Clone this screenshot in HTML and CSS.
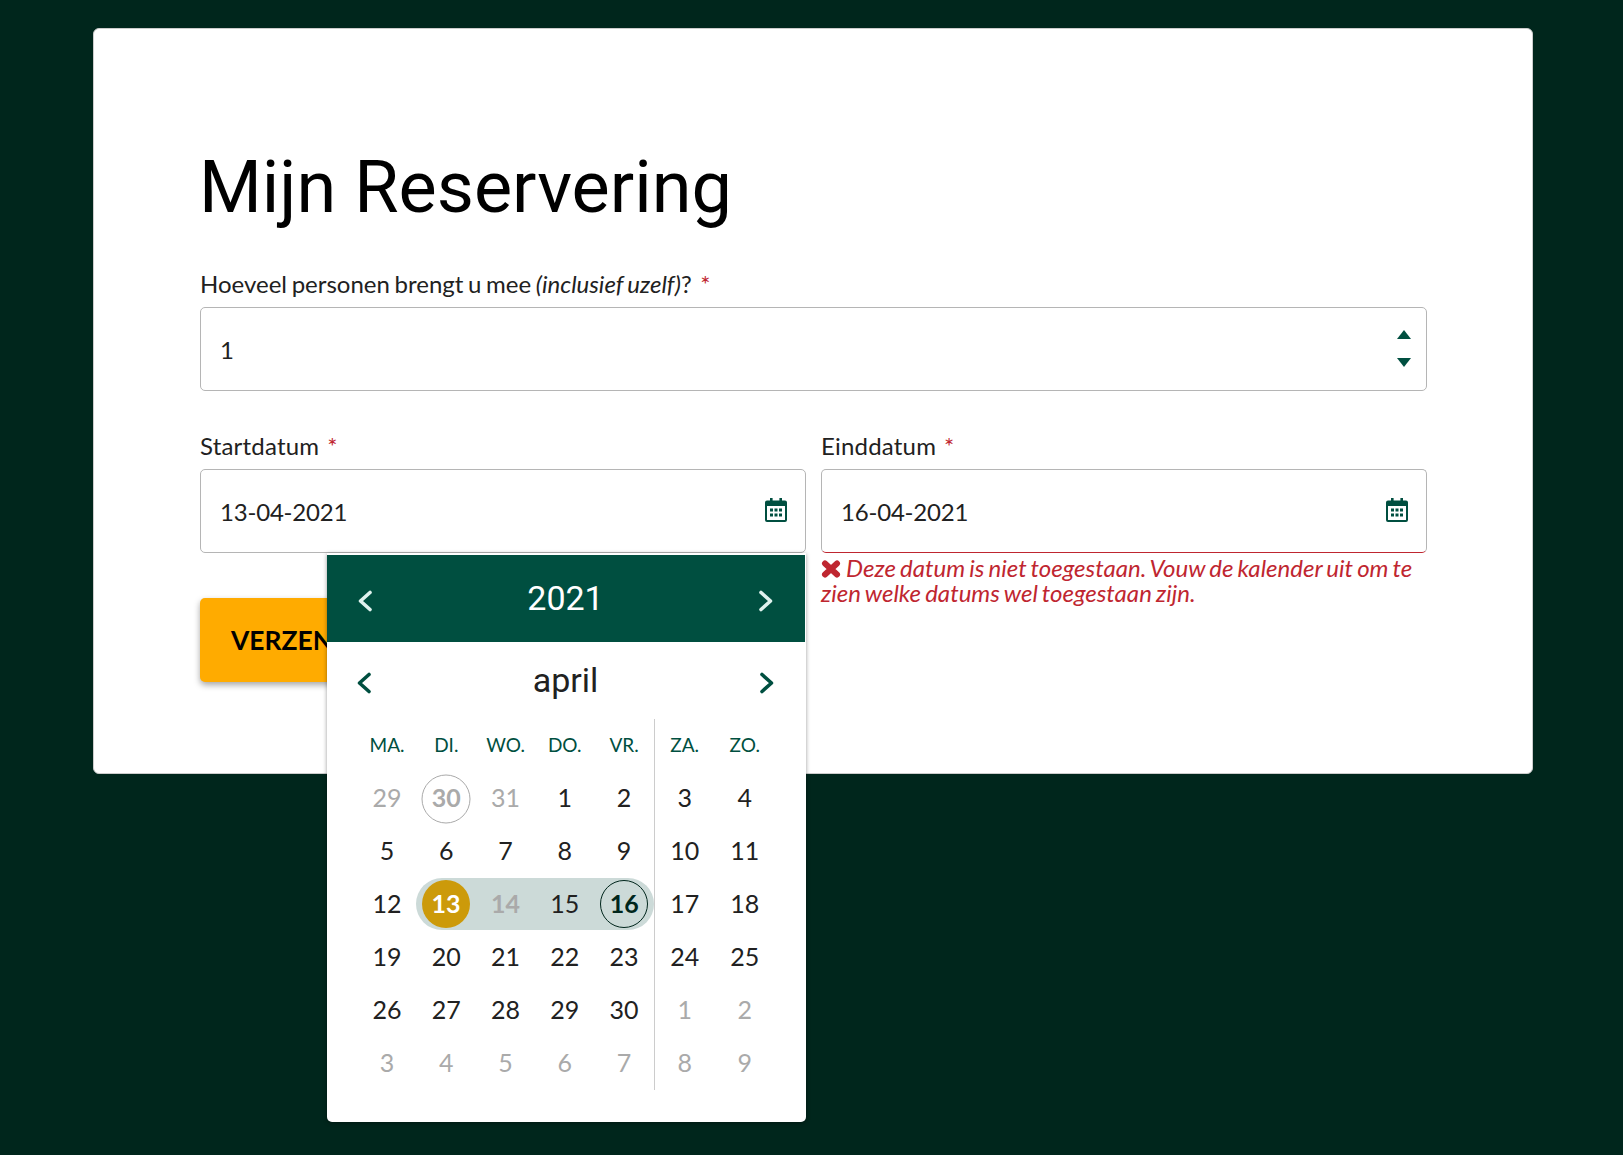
FILE: index.html
```html
<!DOCTYPE html>
<html lang="nl">
<head>
<meta charset="utf-8">
<title>Mijn Reservering</title>
<link rel="stylesheet" href="styles.css">
</head>
<body>
<svg class="defs" width="0" height="0" aria-hidden="true">
  <symbol id="cal" viewBox="0 0 22 24">
    <path fill="currentColor" d="M5 0h2.600v2.500h6.800V0H17v2.500h3a2 2 0 0 1 2 2V22a2 2 0 0 1-2 2H2a2 2 0 0 1-2-2V4.500a2 2 0 0 1 2-2h3V0zM2 8v14h18V8H2z"/>
    <path fill="currentColor" d="M5 10.500h3v3H5zM9.500 10.500h3v3h-3zM14 10.500h3v3h-3zM5 15.500h3v3H5zM9.500 15.500h3v3h-3zM14 15.500h3v3h-3z"/>
  </symbol>
  <symbol id="chev" viewBox="0 0 14 22">
    <path fill="none" stroke="currentColor" stroke-width="3.600" stroke-linecap="round" stroke-linejoin="round" d="M12 2.500 2.500 11l9.500 8.500"/>
  </symbol>
</svg>
<main class="card">
  <h1 class="title">Mijn Reservering</h1>
  <div class="field">
    <label class="label">Hoeveel personen brengt u mee <em>(inclusief uzelf)</em>? <span class="req">*</span></label>
    <div class="input">
      <span>1</span>
      <span class="spin">
        <svg width="14" height="9" viewBox="0 0 14 9"><path fill="currentColor" d="M7 0l7 9H0z"/></svg>
        <svg width="14" height="9" viewBox="0 0 14 9"><path fill="currentColor" d="M0 0h14L7 9z"/></svg>
      </span>
    </div>
  </div>
  <div class="dates">
    <div class="field date-field">
      <label class="label">Startdatum <span class="req">*</span></label>
      <div class="input">
        <span>13-04-2021</span>
        <svg class="cal-icon"><use href="#cal"/></svg>
      </div>
      <section class="picker">
        <header class="year-bar">
          <svg class="chev"><use href="#chev"/></svg>
          <span>2021</span>
          <svg class="chev flip"><use href="#chev"/></svg>
        </header>
        <div class="month-bar">
          <svg class="chev"><use href="#chev"/></svg>
          <span>april</span>
          <svg class="chev flip"><use href="#chev"/></svg>
        </div>
        <div class="cal">
          <div class="dow">MA.</div><div class="dow">DI.</div><div class="dow">WO.</div><div class="dow">DO.</div><div class="dow">VR.</div><div class="dow">ZA.</div><div class="dow">ZO.</div>
          <div class="d off">29</div><div class="d off bold today">30</div><div class="d off">31</div><div class="d">1</div><div class="d">2</div><div class="d">3</div><div class="d">4</div>
          <div class="d">5</div><div class="d">6</div><div class="d">7</div><div class="d">8</div><div class="d">9</div><div class="d">10</div><div class="d">11</div>
          <div class="d">12</div><div class="d r-start"><span class="start">13</span></div><div class="d r off bold">14</div><div class="d r">15</div><div class="d r-end"><span class="end">16</span></div><div class="d">17</div><div class="d">18</div>
          <div class="d">19</div><div class="d">20</div><div class="d">21</div><div class="d">22</div><div class="d">23</div><div class="d">24</div><div class="d">25</div>
          <div class="d">26</div><div class="d">27</div><div class="d">28</div><div class="d">29</div><div class="d">30</div><div class="d off">1</div><div class="d off">2</div>
          <div class="d off">3</div><div class="d off">4</div><div class="d off">5</div><div class="d off">6</div><div class="d off">7</div><div class="d off">8</div><div class="d off">9</div>
        </div>
      </section>
    </div>
    <div class="field date-field">
      <label class="label">Einddatum <span class="req">*</span></label>
      <div class="input invalid">
        <span>16-04-2021</span>
        <svg class="cal-icon"><use href="#cal"/></svg>
      </div>
      <p class="error"><svg class="x" viewBox="0 0 20 18"><path fill="none" stroke="currentColor" stroke-width="6" stroke-linecap="round" d="M4 3.500 16 14.500M16 3.500 4 14.500"/></svg> Deze datum is niet toegestaan. Vouw de kalender uit om te zien welke datums wel toegestaan zijn.</p>
    </div>
  </div>
  <button class="submit" type="button">VERZENDEN</button>
</main>
</body>
</html>
```
FILE: styles.css
```css
* { box-sizing: border-box; }
html, body { margin: 0; }
body {
  background: #00261c;
  color: #212121;
  font-family: "Lato", sans-serif;
  font-size: 24px;
  height: 1155px;
  overflow: hidden;
  padding: 28px 90px 0 93px;
}
.defs { display: block; height: 0; }
.card {
  background: #fff;
  border: 1px solid #ccc;
  border-radius: 6px;
  height: 746px;
  padding: 117px 105px 0 106px;
}
.title {
  font-family: "Roboto", sans-serif;
  font-weight: 400;
  font-size: 72px;
  line-height: 84px;
  color: #000;
  margin: 0 0 40px -1px;
}
.label {
  display: block;
  line-height: 28px;
  margin-bottom: 9px;
  word-spacing: -1.500px;
}
.date-field .label { letter-spacing: .2px; }
.date-field .req { margin-left: 3px; }
.req { color: #bf2630; margin-left: 4px; }
.input {
  height: 84px;
  border: 1px solid #b5b5b5;
  border-radius: 5px;
  padding: 0 19px;
  display: flex;
  align-items: center;
  justify-content: space-between;
  background: #fff;
  letter-spacing: -.2px;
}
.input.invalid { border-bottom-color: #bf2630; }
.spin {
  display: flex;
  flex-direction: column;
  gap: 19px;
  color: #004f40;
  margin: -2px -4px 0 0;
}
.spin svg { display: block; }
.cal-icon { width: 22px; height: 24px; color: #004f40; margin: -2px -1px 0 0; }
.dates {
  display: grid;
  grid-template-columns: 606px 606px;
  gap: 15px;
  margin-top: 41px;
}
.date-field { position: relative; }
.error {
  margin: 2px 0 0;
  color: #bf2630;
  font-style: italic;
  line-height: 25px;
  word-spacing: -1.500px;
}
.x { width: 20px; height: 18px; vertical-align: -1px; margin-right: 1px; }
.submit {
  display: block;
  height: 84px;
  width: 260px;
  margin-top: -7px;
  border: 0;
  border-radius: 5px;
  background: #ffab00;
  color: #000;
  font: 700 26.400px "Lato", sans-serif;
  text-align: left;
  padding: 0 0 0 31px;
  box-shadow: 0 3px 6px rgba(0,0,0,.35);
}
.picker {
  position: absolute;
  left: 127px;
  top: 121px;
  width: 479px;
  height: 569px;
  z-index: 2;
  background: #fff;
  border-radius: 0 0 5px 5px;
  padding-top: 2px;
  box-shadow: 0 1px 4px rgba(0,0,0,.4);
}
.year-bar, .month-bar {
  display: flex;
  align-items: center;
  justify-content: space-between;
  font-family: "Roboto", sans-serif;
  font-size: 34px;
}
.year-bar { height: 87px; background: #004f40; color: #fff; margin-right: 1px; padding: 0 32px 0 31px; }
.year-bar span { margin-top: -2px; }
.year-bar .chev { color: #dff2ee; }
.month-bar { height: 77px; color: #004f40; padding: 0 32px 0 30px; }
.month-bar span { color: #212121; margin-top: -2px; }
.chev { width: 14px; height: 22px; display: block; margin-top: 4px; }
.chev.flip { transform: scaleX(-1); }
.cal {
  position: relative;
  display: grid;
  grid-template-columns: repeat(5, 59.250px) 62.100px 58px;
  grid-template-rows: 51px repeat(6, 53px);
  padding-left: 30.400px;
  text-align: center;
}
.cal::after {
  content: "";
  position: absolute;
  left: 327px;
  top: 0;
  width: 1px;
  height: 371px;
  background: #ccc;
}
.dow, .d { display: flex; align-items: center; justify-content: center; }
.dow { font-size: 19px; color: #004f40; }
.d { font-size: 25px; height: 53px; }
.off { color: #aaa; }
.bold { font-weight: 700; }
.today { position: relative; }
.today::after {
  content: "";
  position: absolute;
  left: 50%; top: calc(50% + 2px);
  width: 47px; height: 47px;
  transform: translate(-50%, -50%);
  border: 1px solid #aaa;
  border-radius: 50%;
}
.r, .r-start, .r-end { background: #ccdad8; height: 52px; margin-top: 2px; }
.r { padding-bottom: 2px; }
.r-start { border-radius: 26px 0 0 26px; margin-left: -.5px; }
.r-end { border-radius: 0 26px 26px 0; margin-right: -.4px; }
.start, .end {
  width: 48px; height: 48px;
  border-radius: 50%;
  display: flex; align-items: center; justify-content: center;
  font-weight: 700;
  padding-bottom: 2px;
}
.start { background: #cc9a0a; color: #fff; }
.end { border: 1px solid #00261c; color: #00261c; }
```
